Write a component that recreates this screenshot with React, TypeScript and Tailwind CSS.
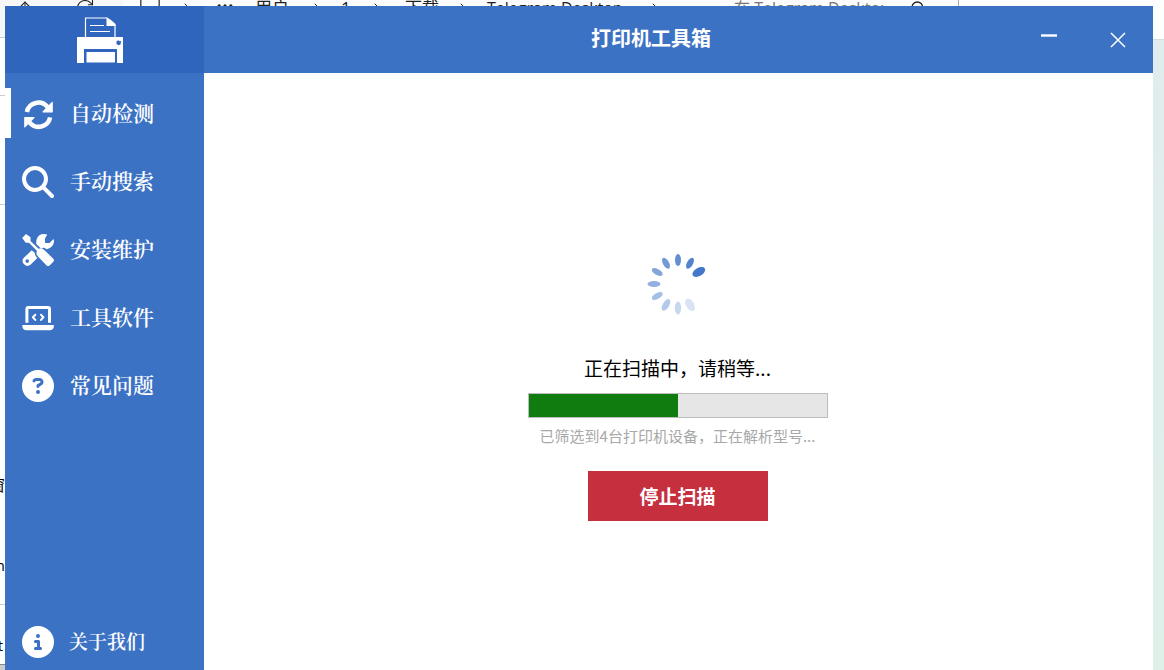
import type { ReactNode } from "react";
import { FaCircleInfo, FaCircleQuestion, FaMagnifyingGlass } from "react-icons/fa6";
import { ArrowUp, ChevronRight, Ellipsis, Monitor, RotateCw, Search } from "lucide-react";

function SyncIcon() {
  return (
    <svg viewBox="0 0 32 32" className="size-8" aria-hidden="true">
      {[0, 180].map((turn) => (
        <g key={turn} transform={`rotate(${turn} 16.5 16.7)`}>
          <path d="M4.900 14A11.700 11.700 0 0 1 25.500 9" fill="none" stroke="#fff" strokeWidth="4.500" />
          <path d="M30.200 4.500v9.300h-9.200Z" fill="#fff" stroke="#fff" strokeWidth="1.200" strokeLinejoin="round" />
        </g>
      ))}
    </svg>
  );
}

function ToolsIcon() {
  return (
    <svg viewBox="0 0 32 32" className="size-8" fill="#fff" aria-hidden="true">
      <path d="M4 0 8.500 3.300V7l8 7.700q3-1 5.500 1l9.300 9q1.400 1.500 0 3l-3.700 3.700q-1.500 1.200-3 0L16 22.500q-2.500-2.500-1-5.500L7 8.700H3.700L.2 4Z" />
      <path d="M25.300.500Q17-1.500 14.600 5.500 14 8 14.300 10l4.600 4.400Q22 13 24.500 15.300 31 13.500 32 8q0-2-.5-3l-4 4H23V4.500Z" />
      <path
        fillRule="evenodd"
        d="M9.800 16.200 1.600 24A4.900 4.900 0 0 0 8.500 30.800l6.800-6.900Q12.500 21.500 12.900 19Z M5.200 25.300a1.800 1.800 0 1 1 0 3.600 1.800 1.800 0 0 1 0-3.600Z"
      />
    </svg>
  );
}

function LaptopIcon() {
  return (
    <svg viewBox="0 0 32 32" className="size-8" fill="none" stroke="#fff" aria-hidden="true">
      <path d="M4.900 20.700V7q0-1.500 1.500-1.500h19.600q1.500 0 1.500 1.500v13.700" strokeWidth="3" />
      <path d="M13.300 12.700 10.900 15.300l2.400 2.600M19 12.700l2.400 2.600L19 17.900" strokeWidth="2" strokeLinecap="round" strokeLinejoin="round" />
      <path d="M.3 23.600q0-.6.600-.6h30.400q.6 0 .6.600 0 4.700-4.300 4.700h-23Q.3 28.300.3 23.600Z" fill="#fff" stroke="none" />
    </svg>
  );
}

const navItems: { label: string; icon: ReactNode; active?: boolean }[] = [
  { label: "自动检测", icon: <SyncIcon />, active: true },
  { label: "手动搜索", icon: <FaMagnifyingGlass size={32} /> },
  { label: "安装维护", icon: <ToolsIcon /> },
  { label: "工具软件", icon: <LaptopIcon /> },
  { label: "常见问题", icon: <FaCircleQuestion size={32} /> },
];

const petals = [
  { angle: 60, color: "#4377c9", rx: 7, ry: 4 },
  { angle: 30, color: "#5484cd", rx: 6, ry: 3 },
  { angle: 0, color: "#638fd2", rx: 6, ry: 3 },
  { angle: 330, color: "#729ad7", rx: 6, ry: 3 },
  { angle: 300, color: "#83a6dc", rx: 6, ry: 3 },
  { angle: 270, color: "#93b1e0", rx: 6.5, ry: 3 },
  { angle: 240, color: "#a5bfe6", rx: 6, ry: 3 },
  { angle: 210, color: "#b5caea", rx: 6.5, ry: 3.2 },
  { angle: 180, color: "#c8d7f0", rx: 6.5, ry: 3.2 },
  { angle: 150, color: "#d9e3f4", rx: 7, ry: 4 },
];

function Spinner() {
  return (
    <svg viewBox="-31 -31 62 62" className="size-[62px]" role="img" aria-label="扫描中">
      {petals.map((p) => (
        <ellipse
          key={p.angle}
          cx="0"
          cy="-24"
          rx={p.ry}
          ry={p.rx}
          fill={p.color}
          transform={`rotate(${p.angle})`}
        />
      ))}
    </svg>
  );
}

function PrinterLogo() {
  return (
    <svg viewBox="0 0 46 46" className="size-[46px]" aria-hidden="true">
      <path d="M8.5 21V1H30l8 7v13" fill="none" stroke="#fff" strokeWidth="1.2" />
      <path d="M29.500 .5 34 3l4.500 4v2h-9Z" fill="#fff" />
      <path d="M13 8.500h14M13 14.500h20" stroke="#fff" strokeWidth="1.2" />
      <path d="M0 20h46v26h-6V32H7v14H0Z" fill="#fff" />
      <path d="M9.500 35H38v10.500H9.500Z" fill="#fff" />
      <path d="M39.500 24.300l2-1 1 1 1.800-.3-.5 1.500-.3 2-2 .8-2-1.200Z" fill="#3065bd" />
    </svg>
  );
}

function Desktop() {
  return (
    <div
      aria-hidden="true"
      className="flex h-screen w-full flex-col overflow-hidden bg-white font-['Open_Sans','Noto_Sans_CJK_SC',sans-serif] [grid-area:1/1]"
    >
      <div className="flex h-10 shrink-0 overflow-hidden whitespace-nowrap text-[17px] leading-4 text-[#222]">
        <div className="flex h-[38px] w-[123px] shrink-0 gap-10 border-b border-[#ccc] bg-[#f7f7f7] pl-[15px]">
          <ArrowUp size={20} strokeWidth={1.3} className="-mt-0.5" />
          <RotateCw size={20} strokeWidth={1.3} className="-mt-0.5" />
        </div>
        <div className="flex h-[38px] w-[592px] shrink-0 border-b border-[#ccc] bg-[#fcfcfc] pl-4">
          <span className="-mt-1 w-10 shrink-0"><Monitor size={22} strokeWidth={1.3} /></span>
          <span className="w-9 shrink-0"><ChevronRight size={16} strokeWidth={1.5} /></span>
          <span className="-mt-1 w-10 shrink-0"><Ellipsis size={20} /></span>
          <span className="w-[54px] shrink-0">用户</span>
          <span className="w-8 shrink-0"><ChevronRight size={16} strokeWidth={1.5} /></span>
          <span className="w-7 shrink-0">1</span>
          <span className="w-9 shrink-0"><ChevronRight size={16} strokeWidth={1.5} /></span>
          <span className="w-[50px] shrink-0">下载</span>
          <span className="w-8 shrink-0"><ChevronRight size={16} strokeWidth={1.5} /></span>
          <span className="w-40 shrink-0 text-base leading-4">Telegram Desktop</span>
          <ChevronRight size={16} strokeWidth={1.5} />
        </div>
        <div className="flex h-[38px] w-[244px] shrink-0 border-r border-[#aaa] bg-[#fcfcfc] pl-[19px] text-[#777]">
          <span className="w-[176px] shrink-0 text-base leading-4">在 Telegram Deskto:</span>
          <Search size={16} className="text-[#222]" />
        </div>
        <div className="flex-1 border-b border-[#d5dfe0] bg-[#fdfefe]" />
      </div>
      <div className="flex min-h-0 flex-1 justify-between">
        <div className="flex w-[5px] shrink-0 flex-col items-end overflow-hidden text-[15px] leading-5 text-black">
          <div className="h-14 w-full shrink-0 border-b border-[#ccc]" />
          <div className="h-[109px] w-full shrink-0 border-b border-[#ccc]" />
          <div className="flex h-[400px] w-full shrink-0 flex-col items-end gap-[60px] border-b border-[#ccc] pt-[270px]">
            <span>窗</span>
            <span>m</span>
          </div>
          <div className="flex h-[60px] w-full shrink-0 flex-col items-end border-b border-[#888] pt-[30px] pr-0.5">
            <span>t</span>
          </div>
          <div className="w-full flex-1 bg-[#ccc]" />
        </div>
        <div className="w-3 shrink-0 bg-linear-to-b from-[#e0eced] to-[#dff0e9]" />
      </div>
    </div>
  );
}

export default function App() {
  return (
    <div className="grid h-screen grid-cols-1 overflow-hidden">
      <Desktop />
      <div className="z-10 mt-1.5 mr-[11px] ml-[5px] flex min-h-0 bg-white font-['Noto_Sans_CJK_SC',sans-serif] [grid-area:1/1]">
        <aside className="flex w-[199px] shrink-0 flex-col bg-[#3c72c4] text-white">
          <div className="flex h-[67px] shrink-0 items-center justify-center bg-[#3065bd] pr-2.5">
            <PrinterLogo />
          </div>
          <nav className="flex flex-1 flex-col pt-[7px] font-['Noto_Serif_CJK_SC','Noto_Serif_SC','Noto_Sans_CJK_SC',serif] font-semibold">
            {navItems.map(({ label, icon, active }) => (
              <button
                key={label}
                type="button"
                aria-current={active ? "page" : undefined}
                className="flex h-[68px] items-center text-left text-[21px] leading-6"
              >
                <span className={active ? "mb-0.5 h-[50px] w-1.5 bg-white" : "mb-0.5 h-[50px] w-1.5"} />
                <span className="ml-2.5 flex w-[34px] justify-center">{icon}</span>
                <span className="mb-1 ml-[15px]">{label}</span>
              </button>
            ))}
            <button type="button" className="mt-auto flex h-14 items-center pl-4 text-left text-[19px] leading-6">
              <span className="flex w-[34px] justify-center">
                <FaCircleInfo size={32} />
              </span>
              <span className="mb-0.5 ml-3.5">关于我们</span>
            </button>
          </nav>
        </aside>
        <div className="flex min-w-0 flex-1 flex-col">
          <header className="flex h-[67px] shrink-0 bg-[#3c72c4] text-white">
            <h1 className="flex flex-1 items-center justify-center pb-1 pl-[84px] text-[20px] leading-6 font-bold">
              打印机工具箱
            </h1>
            <button type="button" aria-label="最小化" className="flex w-[69px] justify-center pt-7">
              <svg viewBox="0 0 18 4" className="h-1 w-[18px]">
                <path d="M1 1.500h16" stroke="#fff" strokeWidth="2.400" />
              </svg>
            </button>
            <button type="button" aria-label="关闭" className="flex w-[70px] items-center justify-center">
              <svg viewBox="0 0 16 16" className="size-4">
                <path d="M1 1l14 14M15 1 1 15" stroke="#fff" strokeWidth="1.500" />
              </svg>
            </button>
          </header>
          <main className="flex flex-1 flex-col items-center pt-[180px] pr-0.5">
            <Spinner />
            <p className="mt-[39px] text-[19px] leading-7 text-black">正在扫描中，请稍等...</p>
            <progress
              value={50}
              max={100}
              aria-label="扫描进度"
              className="mt-[11px] h-[25px] w-[300px] appearance-none border border-[#bcbcbc] [&::-webkit-progress-bar]:bg-[#e6e6e6] [&::-webkit-progress-value]:bg-[#107c10]"
            />
            <p className="mt-2 text-[15px] leading-5 text-[#a8a8a8]">已筛选到4台打印机设备，正在解析型号...</p>
            <button
              type="button"
              className="mt-[25px] h-[50px] w-[180px] bg-[#c52f3e] text-[19px] leading-6 font-bold text-white"
            >
              停止扫描
            </button>
          </main>
        </div>
      </div>
    </div>
  );
}
